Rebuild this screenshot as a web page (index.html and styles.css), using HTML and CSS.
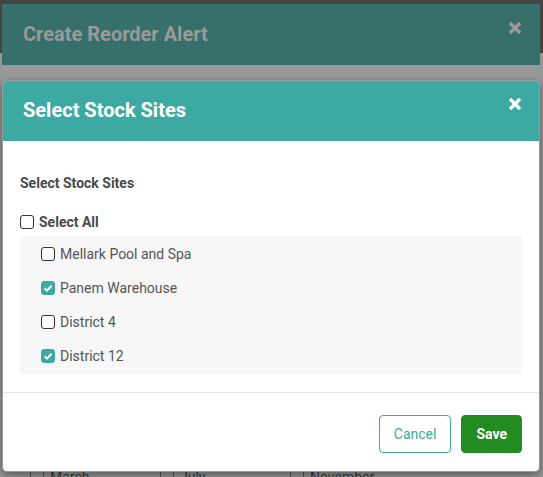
FILE: index.html
```html
<!DOCTYPE html>
<html lang="en">
<head>
<meta charset="utf-8">
<title>Select Stock Sites</title>
<link rel="stylesheet" href="styles.css">
</head>
<body>
<div class="page">
  <div class="navbar"></div>
</div>

<div class="modal back">
  <div class="modal-header back-header">
    <h4 class="modal-title">Create Reorder Alert</h4>
    <span class="close">
      <svg width="14" height="14" viewBox="0 0 14 14"><path d="M2 2 L12 12 M12 2 L2 12" stroke="currentColor" stroke-width="3.4" fill="none"/></svg>
    </span>
  </div>
  <div class="back-body">
    <div class="month-row">
      <div class="cell narrow"></div>
      <div class="cell wide">March</div>
      <div class="cell narrow"></div>
      <div class="cell wide">July</div>
      <div class="cell narrow"></div>
      <div class="cell wide last">November</div>
    </div>
  </div>
</div>

<div class="modal front">
  <div class="modal-header front-header">
    <h4 class="modal-title">Select Stock Sites</h4>
    <span class="close">
      <svg width="14" height="14" viewBox="0 0 14 14"><path d="M2 2 L12 12 M12 2 L2 12" stroke="currentColor" stroke-width="3.4" fill="none"/></svg>
    </span>
  </div>
  <div class="modal-body">
    <div class="field-label">Select Stock Sites</div>
    <label class="check-row select-all">
      <span class="cb"></span>
      <span>Select All</span>
    </label>
    <div class="site-list">
      <label class="check-row site">
        <span class="cb"></span>
        <span>Mellark Pool and Spa</span>
      </label>
      <label class="check-row site">
        <span class="cb checked"><svg width="14" height="14" viewBox="0 0 14 14"><path d="M3.6 7.3 L6 9.6 L10.6 4.7" stroke="#fff" stroke-width="2" fill="none"/></svg></span>
        <span>Panem Warehouse</span>
      </label>
      <label class="check-row site">
        <span class="cb"></span>
        <span>District 4</span>
      </label>
      <label class="check-row site">
        <span class="cb checked"><svg width="14" height="14" viewBox="0 0 14 14"><path d="M3.6 7.3 L6 9.6 L10.6 4.7" stroke="#fff" stroke-width="2" fill="none"/></svg></span>
        <span>District 12</span>
      </label>
    </div>
  </div>
  <div class="modal-footer">
    <button class="btn btn-cancel">Cancel</button>
    <button class="btn btn-save">Save</button>
  </div>
</div>
</body>
</html>
```

FILE: styles.css
```css
html, body {
  margin: 0;
  padding: 0;
}
body {
  width: 543px;
  height: 477px;
  overflow: hidden;
  background: #979797;
  font-family: Roboto, "Liberation Sans", Arial, sans-serif;
  position: relative;
}
.navbar {
  height: 53px;
  background: #454545;
}
.modal {
  position: absolute;
  left: 2px;
  width: 538px;
  box-sizing: border-box;
}
.back {
  top: 4px;
  height: 473px;
  overflow: hidden;
  background: #999999;
  border-radius: 4px 4px 0 0;
}
.modal-header {
  display: flex;
  align-items: flex-start;
  height: 61px;
  box-sizing: border-box;
}
.back-header {
  background: #376f6a;
  padding: 19px 18px 20px 21px;
  color: #9a9a9a;
  border-radius: 4px 4px 0 0;
}
.front-header {
  background: #3ca9a2;
  padding: 18px 17px 20px 20px;
  height: 60px;
  color: #ffffff;
  border-radius: 4px 4px 0 0;
}
.modal-title {
  flex: 1;
  margin: 0;
  font-size: 20px;
  line-height: 22px;
  font-weight: 700;
}
.close {
  display: block;
  width: 14px;
  height: 14px;
  margin-top: -2px;
}
.close svg {
  display: block;
}
.back-body {
  padding-top: 395px;
}
.month-row {
  display: flex;
  padding-left: 28px;
  height: 17px;
}
.cell {
  border-left: 1px solid #555;
  box-sizing: border-box;
  font-size: 14px;
  line-height: 20px;
  color: #3a3a3a;
  padding-top: 7px;
}
.cell.narrow {
  width: 13px;
}
.cell.wide {
  width: 117px;
  padding-left: 6px;
}
.cell.last {
  width: 200px;
}
.front {
  top: 80px;
  background: #ffffff;
  border: 1px solid rgba(0, 0, 0, 0.4);
  border-radius: 5px;
  box-shadow: 0 3px 8px rgba(0, 0, 0, 0.45);
}
.modal-body {
  padding: 32px 17px 18px 17px;
}
.field-label {
  font-size: 14px;
  line-height: 20px;
  font-weight: 700;
  color: #4a4a4a;
  margin-bottom: 19px;
}
.check-row {
  display: flex;
  align-items: center;
  gap: 5px;
  font-size: 14px;
  line-height: 20px;
  color: #555555;
}
.select-all {
  font-weight: 700;
  color: #4a4a4a;
  margin-bottom: 4px;
}
.cb {
  display: block;
  width: 14px;
  height: 14px;
  box-sizing: border-box;
  border: 1px solid #333333;
  border-radius: 3px;
  background: #ffffff;
}
.cb.checked {
  background: #3ca9a2;
  border-color: #3ca9a2;
}
.cb svg {
  display: block;
  margin: -1px;
}
.site-list {
  background: #f7f7f7;
  padding: 1px 0 1px 21px;
}
.site {
  padding: 7px 0;
}
.modal-footer {
  border-top: 1px solid #e2e2e2;
  padding: 22px 17px 18px 17px;
  display: flex;
  justify-content: flex-end;
  gap: 10px;
}
.btn {
  height: 38px;
  padding: 0 14px;
  border-radius: 4px;
  font-family: Roboto, "Liberation Sans", Arial, sans-serif;
  font-size: 14px;
  border: 1px solid transparent;
  cursor: pointer;
}
.btn-cancel {
  background: #ffffff;
  border-color: #3ca9a2;
  color: #3ca9a2;
}
.btn-save {
  background: #228b22;
  border-color: #228b22;
  color: #ffffff;
  font-weight: 700;
}
```
